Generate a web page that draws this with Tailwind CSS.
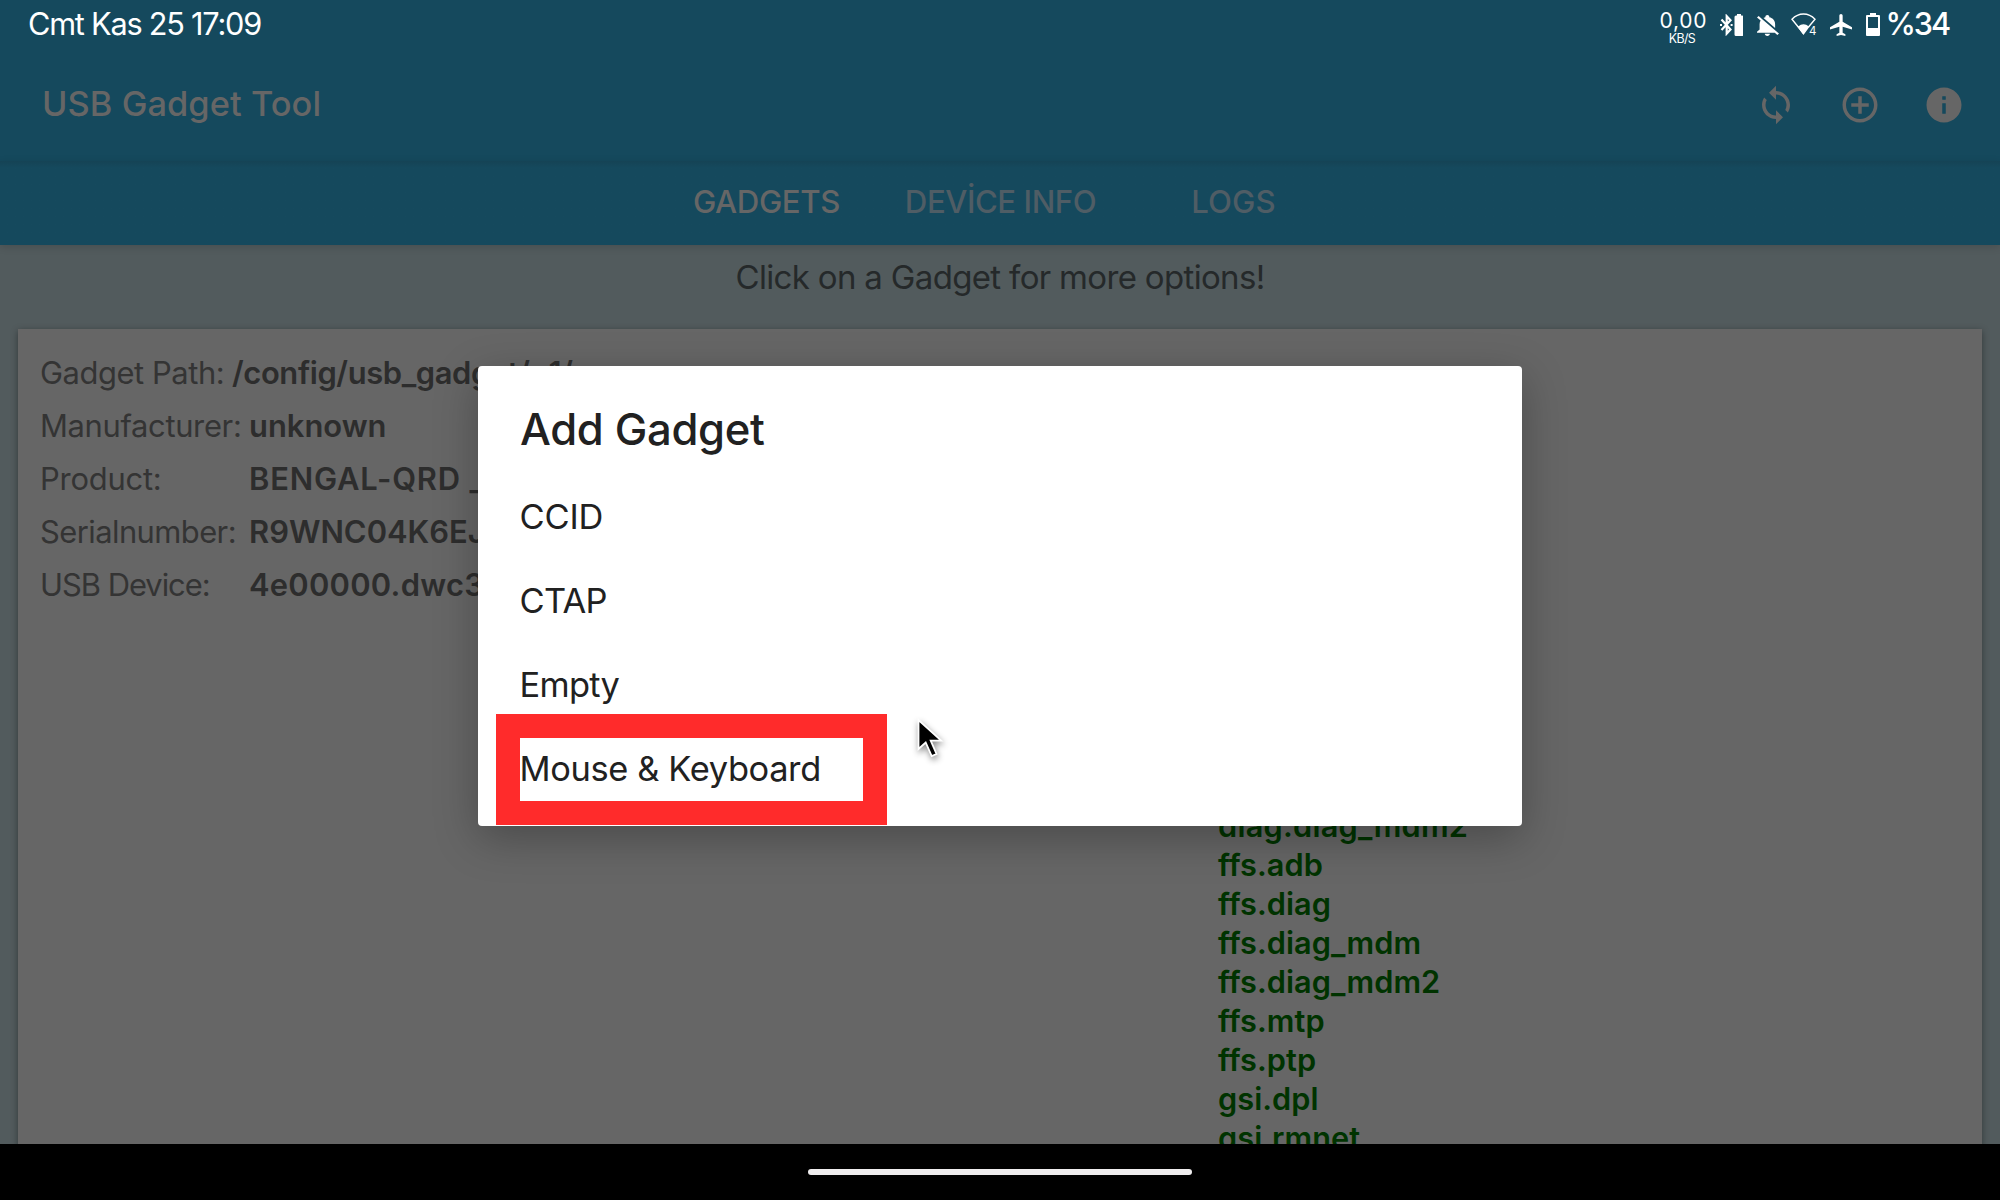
<!DOCTYPE html>
<html lang="tr">
<head>
<meta charset="utf-8">
<title>USB Gadget Tool</title>
<script src="https://cdn.jsdelivr.net/npm/@tailwindcss/browser@4"></script>
</head>
<body class="font-['Inter',sans-serif]">
<div class="relative w-[2000px] h-[1200px] overflow-hidden flex flex-col bg-[#525b5d]">

  <!-- Status bar -->
  <div class="h-[48px] shrink-0 flex items-center justify-between bg-[#15495d] text-white pl-7 pr-[51px]">
    <div class="text-[30.7px] leading-[48px] tracking-[-1.23px] whitespace-nowrap">Cmt Kas 25 17:09</div>
    <div class="flex items-center h-[48px]">
      <div class="flex flex-col items-center w-[47px] mr-[14px]">
        <div class="text-[21px] leading-[20px] tracking-[0.8px] mt-[9px] -mr-[1px]">0,00</div>
        <div class="text-[12.4px] leading-[14px] tracking-[-0.6px] mt-[1px] -ml-[2px]">KB/S</div>
      </div>
      <svg class="w-[23px] h-[22px] mr-[14px] mt-[2px]" viewBox="0 0 23 22" fill="none" stroke="white" stroke-width="2.2"><path d="M1.5 5.5 10.5 15.5 6.7 19.6V2.2L10.5 6.2 1.5 16"/><path d="M0 11h2M10.600 11h2"/><path d="M16 1.500h1V0h4v1.500h1a1.500 1.500 0 0 1 1.500 1.500v17.500a1.500 1.500 0 0 1-1.500 1.500h-6a1.500 1.500 0 0 1-1.500-1.500V3A1.500 1.500 0 0 1 16 1.500z" fill="white" stroke="none"/></svg>
      <svg class="w-[22px] h-[21px] mr-[12px] mt-[2px]" viewBox="4 2.5 17 19.5" preserveAspectRatio="none" fill="white"><path d="M20 18.690L7.840 6.140 5.270 3.490 4 4.760l2.800 2.800v.01c-.52.99-.8 2.160-.8 3.420v5l-2 2v1h13.730l2 2L21 19.720l-1-1.030zM12 22c1.110 0 2-.89 2-2h-4c0 1.110.89 2 2 2zm6-7.320V11c0-3.080-1.640-5.640-4.500-6.320V4c0-.83-.67-1.500-1.500-1.500s-1.500.67-1.500 1.500v.68c-.15.03-.29.08-.42.12-.1.03-.2.07-.3.11h-.01c-.01 0-.01 0-.02.01-.23.09-.46.2-.68.31 0 0-.01 0-.01.01L18 14.680z"/></svg>
      <div class="relative w-[25px] h-[22px] mr-[14px]">
        <svg class="w-[25px] h-[22px]" viewBox="0 0 25 22" fill="none" stroke="white" stroke-width="1.400"><path d="M17.500 14 24 6.300C20.800 2.900 16.700 1 12.500 1S4.200 2.900 1 6.300L12.500 20.500"/><path d="M7.500 14C10.500 11.600 14.500 11.600 17.500 14L12.500 20.800z" fill="white"/></svg>
        <span class="absolute left-[17.500px] top-[12.500px] text-[11.500px] leading-[11px]">4</span>
      </div>
      <svg class="w-[22px] h-[22px] mr-[14px] mt-[2px]" viewBox="2 2 20 20" preserveAspectRatio="none" fill="white"><path d="M22 16v-2l-8.500-5V3.500c0-.83-.67-1.500-1.500-1.500s-1.500.67-1.500 1.500V9L2 14v2l8.500-2.500V19L8 20.500V22l4-1 4 1v-1.500L13.500 19v-5.500L22 16z"/></svg>
      <svg class="w-[14px] h-[23px] mr-[5px] mt-[1px]" viewBox="0 0 14 23" fill="white"><path fill-rule="evenodd" d="M4 0h6v2h3a1 1 0 0 1 1 1v19a1 1 0 0 1-1 1H1a1 1 0 0 1-1-1V3a1 1 0 0 1 1-1h3zM2 4v11h10V4z"/></svg>
      <div class="text-[30.7px] leading-[48px] font-medium tracking-[-2.1px] whitespace-nowrap">%34</div>
    </div>
  </div>

  <!-- App bar -->
  <div class="h-[113px] shrink-0 flex items-center justify-between bg-[#15495d] text-[#666] pl-[42px] pr-[35px]">
    <div class="text-[34.4px] leading-[44px] font-medium tracking-[0.06px] -mt-[2px] whitespace-nowrap">USB Gadget Tool</div>
    <div class="flex gap-[42px]">
      <svg class="size-[42px]" viewBox="0 0 24 24" fill="currentColor"><path d="M12 4V1L8 5l4 4V6c3.310 0 6 2.690 6 6 0 1.010-.25 1.970-.7 2.800l1.460 1.460C19.540 15.030 20 13.570 20 12c0-4.420-3.580-8-8-8zm0 14c-3.310 0-6-2.690-6-6 0-1.010.25-1.970.7-2.800L5.240 7.740C4.460 8.970 4 10.430 4 12c0 4.420 3.580 8 8 8v3l4-4-4-4v3z"/></svg>
      <svg class="size-[42px]" viewBox="0 0 24 24" fill="currentColor"><path d="M13 7h-2v4H7v2h4v4h2v-4h4v-2h-4V7zm-1-5C6.480 2 2 6.480 2 12s4.480 10 10 10 10-4.480 10-10S17.520 2 12 2zm0 18c-4.410 0-8-3.590-8-8s3.590-8 8-8 8 3.590 8 8-3.590 8-8 8z"/></svg>
      <svg class="size-[42px]" viewBox="0 0 24 24" fill="currentColor"><path d="M12 2C6.480 2 2 6.480 2 12s4.480 10 10 10 10-4.480 10-10S17.520 2 12 2zm1 15h-2v-6h2v6zm0-8h-2V7h2v2z"/></svg>
    </div>
  </div>

  <!-- Tabs -->
  <div class="relative z-10 h-[84px] shrink-0 flex justify-center bg-[#15495d] bg-linear-to-b from-[#154355] to-[#15495d] to-8% shadow-[0_2px_8px_rgba(0,0,0,0.14)] text-[31.2px] leading-[83px] font-medium text-[#4f5d65] text-center whitespace-nowrap">
    <div class="w-[233.500px] tracking-[-0.38px] text-[#666]">GADGETS</div>
    <div class="w-[233.500px] tracking-[-0.45px] pl-px">DEVİCE INFO</div>
    <div class="w-[233.500px] tracking-[0.15px]">LOGS</div>
  </div>

  <!-- Content -->
  <div class="h-[899px] shrink-0 overflow-hidden flex flex-col">
    <div class="h-[84px] shrink-0 text-center text-[33px] leading-[64px] tracking-[-0.67px] text-[#25292a]">Click on a Gadget for more options!</div>
    <div class="mx-[18px] h-[840px] shrink-0 flex bg-[#666] shadow-[0_2px_7px_rgba(0,0,0,0.4)]">
      <div class="w-[1200px] pl-[22px] pt-[17px] text-[30.9px] leading-[53px] text-[#343434] whitespace-nowrap">
        <div class="flex"><span class="w-[192px] tracking-[-0.43px]">Gadget Path:</span><b class="font-semibold tracking-[-0.38px] text-[#2d2d2d]">/config/usb_gadget/g1/</b></div>
        <div class="flex"><span class="w-[209px] tracking-[-0.33px]">Manufacturer:</span><b class="font-semibold tracking-[0px] text-[#2d2d2d]">unknown</b></div>
        <div class="flex"><span class="w-[209px] tracking-[-0.21px]">Product:</span><b class="font-semibold tracking-[0.8px] text-[#2d2d2d]">BENGAL-QRD _</b></div>
        <div class="flex"><span class="w-[209px] tracking-[-0.56px]">Serialnumber:</span><b class="font-semibold tracking-[0px] text-[#2d2d2d]">R9WNC04K6EJ</b></div>
        <div class="flex"><span class="w-[209px] tracking-[-1.02px]">USB Device:</span><b class="font-semibold tracking-[0.25px] text-[#2d2d2d]">4e00000.dwc3</b></div>
      </div>
      <div class="pt-[477px] text-[30.7px] leading-[39px] font-semibold text-[#003300] tracking-[0.05px] whitespace-nowrap">
        <div class="tracking-[0.25px]">diag.diag_mdm2</div>
        <div>ffs.adb</div>
        <div>ffs.diag</div>
        <div>ffs.diag_mdm</div>
        <div>ffs.diag_mdm2</div>
        <div>ffs.mtp</div>
        <div>ffs.ptp</div>
        <div>gsi.dpl</div>
        <div>gsi.rmnet</div>
      </div>
    </div>
  </div>

  <!-- Navigation bar -->
  <div class="h-[56px] shrink-0 bg-black flex justify-center pt-[25px]">
    <div class="w-[384px] h-[6px] rounded-full bg-[#efedee]"></div>
  </div>

  <!-- Dialog -->
  <div class="absolute left-[478px] top-[366px] w-[1044px] h-[460px] rounded bg-white text-[#212121] shadow-[0_12px_44px_rgba(0,0,0,0.28)] pl-[42px] pt-[34px]">
    <div class="text-[43.6px] leading-[60px] font-medium tracking-[-0.33px]">Add Gadget</div>
    <div class="mt-[15px] text-[34.4px] leading-[84px] -ml-[0.5px]">
      <div class="h-[84px] tracking-[-0.15px]">CCID</div>
      <div class="h-[84px] tracking-[-0.7px]">CTAP</div>
      <div class="h-[84px] tracking-[-0.68px]">Empty</div>
      <div class="h-[84px] tracking-[-0.36px]">Mouse &amp; Keyboard</div>
    </div>
  </div>

  <!-- Highlight and pointer -->
  <div class="absolute left-[496px] top-[714px] w-[391px] h-[111px] border-[24px] border-[#ff2b2b]"></div>
  <svg class="absolute left-[908px] top-[709px] w-[44px] h-[56px] drop-shadow-[1px_3px_3px_rgba(0,0,0,0.45)]" viewBox="0 0 44 56"><path d="M10.500 11v29l7.200-6.500 6 13.500 4.800-2-5.800-13.300h10.500z" fill="black" stroke="white" stroke-width="1.800"/></svg>
</div>
</body>
</html>
